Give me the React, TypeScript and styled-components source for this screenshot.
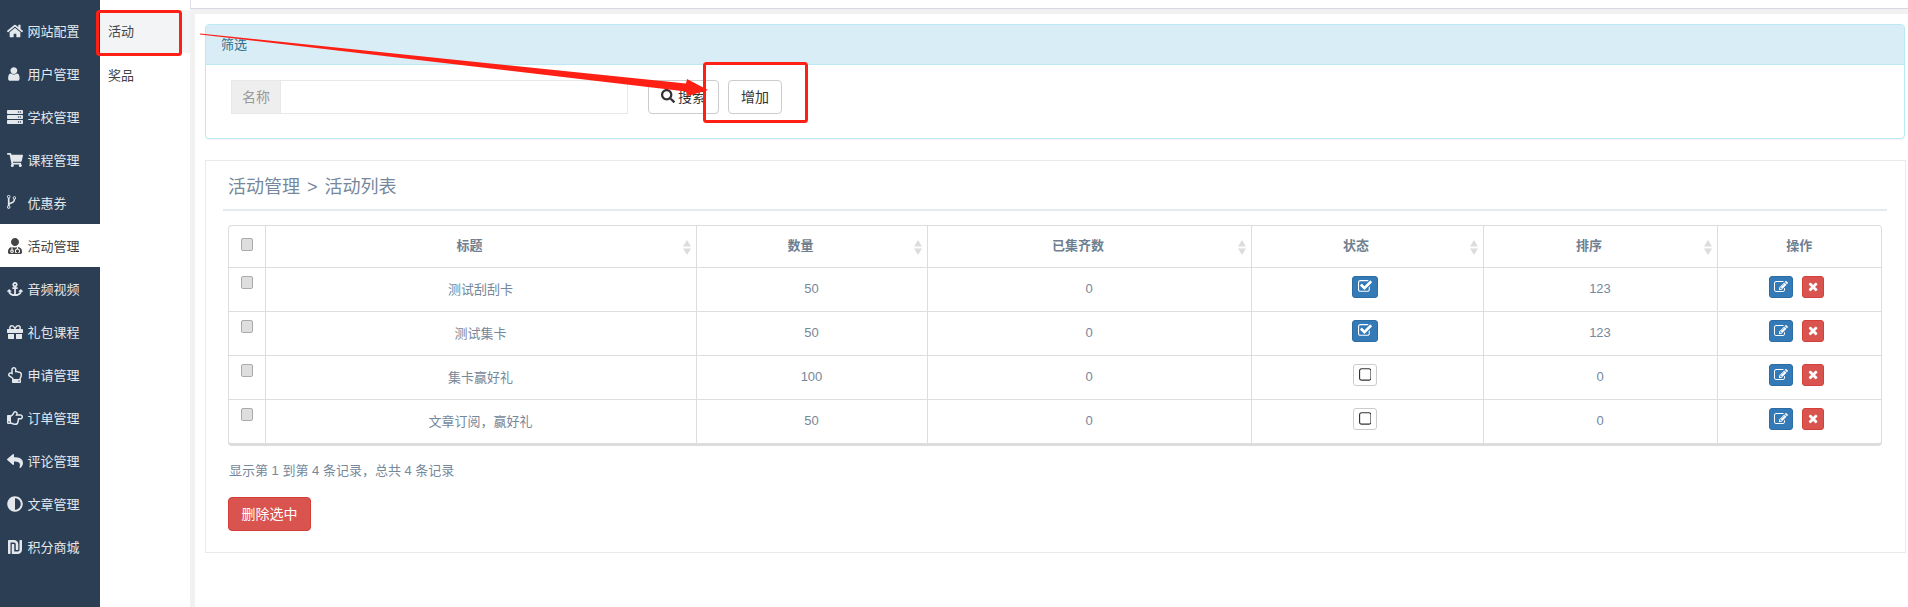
import React from "react";
import styled, { createGlobalStyle } from "styled-components";
import {
  FaHome, FaServer, FaShoppingCart, FaUserMd, FaAnchor, FaGift,
  FaRegHandPointUp, FaRegHandPointRight, FaReply, FaAdjust, FaShekelSign, FaSearch,
} from "react-icons/fa";

const Global = createGlobalStyle`
  html, body { margin: 0; padding: 0; background: #fff; }
  body { font-family: "Liberation Sans", "Noto Sans CJK SC", sans-serif; font-size: 13px; color: #333; }
  * { box-sizing: border-box; }
`;

const Page = styled.div`
  position: relative;
  display: flex;
  width: 1908px;
  height: 607px;
  overflow: hidden;
  background: #fff;
`;

const Sidebar = styled.nav`
  width: 100px;
  flex: none;
  padding-top: 9px;
  background: #2b3e54;
`;

const SideItem = styled.div<{ $active?: boolean }>`
  display: flex;
  align-items: center;
  height: 43px;
  padding-left: 7px;
  font-size: 13px;
  color: ${(p) => (p.$active ? "#444" : "#e4e8ec")};
  background: ${(p) => (p.$active ? "#fff" : "transparent")};
`;

const SideIcon = styled.span`
  display: flex;
  align-items: center;
  width: 20.5px;
  flex: none;
  font-size: 16px;
`;

const SubNav = styled.nav`
  width: 90px;
  flex: none;
  padding-top: 10px;
`;

const SubItem = styled.div<{ $active?: boolean }>`
  display: flex;
  align-items: center;
  height: 43px;
  margin-bottom: 1px;
  padding: 0 0 2px 8px;
  font-size: 13px;
  color: #444;
  background: ${(p) => (p.$active ? "#f3f4f6" : "transparent")};
`;

const Content = styled.div`
  flex: 1;
  display: flex;
  flex-direction: column;
  min-width: 0;
`;

const TopBar = styled.div`
  height: 9px;
  flex: none;
  border-left: 1px solid #dfe2e8;
  border-bottom: 1px solid #d6d9e2;
`;

const Body = styled.div`
  flex: 1;
  padding: 5px 0 0 5px;
  background: #f1f1f1;
  display: flex;
`;

const Inner = styled.main`
  flex: 1;
  padding: 10px 3px 0 10px;
  background: #fff;
`;

const FilterPanel = styled.section`
  height: 115px;
  border: 1px solid #bce8f1;
  border-radius: 4px;
  box-shadow: 0 1px 1px rgba(0, 0, 0, 0.05);
`;

const FilterHeading = styled.div`
  display: flex;
  align-items: center;
  height: 40px;
  padding: 0 0 2px 15px;
  font-size: 13px;
  color: #31708f;
  background: #d9edf7;
  border-bottom: 1px solid #bce8f1;
  border-radius: 3px 3px 0 0;
`;

const FilterRow = styled.div`
  display: flex;
  padding: 15px 0 0 25px;
`;

const InputGroup = styled.div`
  display: flex;
  width: 397px;
  height: 34px;
`;

const Addon = styled.span`
  display: flex;
  align-items: center;
  justify-content: center;
  width: 50px;
  flex: none;
  padding-bottom: 2px;
  font-size: 14px;
  color: #999;
  background: #eee;
  border: 1px solid #e8e8e8;
`;

const TextInput = styled.input`
  flex: 1;
  min-width: 0;
  border: 1px solid #e8e8e8;
  border-left: 0;
  outline: none;
`;

const Button = styled.button<{ $w: number; $ml: number }>`
  display: inline-flex;
  align-items: center;
  justify-content: center;
  gap: 3px;
  width: ${(p) => p.$w}px;
  height: 34px;
  margin-left: ${(p) => p.$ml}px;
  padding: 0 0 2px;
  font: inherit;
  font-size: 14px;
  color: #333;
  background: #fff;
  border: 1px solid #ccc;
  border-radius: 4px;
`;

const Card = styled.section`
  height: 393px;
  margin-top: 21px;
  margin-right: -1px;
  padding: 0 18px 0 17px;
  border: 1px solid #e7eaec;
`;

const CardTitle = styled.h2`
  margin: 0;
  height: 50px;
  padding: 14px 0 0 5px;
  font-size: 18px;
  line-height: 24px;
  font-weight: 400;
  word-spacing: 2px;
  color: #76889b;
  border-bottom: 2px solid #e7eaec;
`;

const TableWrap = styled.div`
  margin: 14px 0 0 5px;
  width: 1654px;
  border: 1px solid #ddd;
  border-bottom-width: 3px;
  border-radius: 4px;
  overflow: hidden;
`;

const Table = styled.table`
  width: 100%;
  table-layout: fixed;
  border-collapse: collapse;
`;

const Head = styled.th<{ $sort?: boolean }>`
  position: relative;
  height: 41px;
  padding: 0 ${(p) => (p.$sort ? 22 : 0)}px 3px 0;
  font-size: 13px;
  font-weight: 700;
  color: #6f7f90;
  text-align: center;
  border-right: 1px solid #ddd;
  border-bottom: 1px solid #ddd;
  &:last-child { border-right: 0; }
`;

const Cell = styled.td`
  height: 44px;
  padding: 0 0 2px;
  font-size: 13px;
  color: #76889b;
  text-align: center;
  border-right: 1px solid #ddd;
  border-bottom: 1px solid #ddd;
  &:last-child { border-right: 0; }
  tr:last-child > & { border-bottom: 0; }
`;

const CheckCell = styled(Cell)`
  vertical-align: top;
  padding-top: 8px;
`;

const CheckHead = styled(Head)`
  vertical-align: top;
  padding-top: 12px;
`;

const Check = styled.input.attrs({ type: "checkbox" })`
  appearance: none;
  display: block;
  width: 12px;
  height: 13px;
  margin: 0 0 0 12px;
  background: #dedede;
  border: 1px solid #aaa;
  border-radius: 2px;
`;

const SortMark = styled.svg`
  position: absolute;
  top: 14px;
  right: 5px;
`;

const IconBtn = styled.span<{ $kind: "blue" | "red" | "plain"; $w: number; $size: number }>`
  display: inline-flex;
  align-items: center;
  justify-content: center;
  width: ${(p) => p.$w}px;
  height: 22px;
  font-size: ${(p) => p.$size}px;
  vertical-align: middle;
  border-radius: 3px;
  color: ${(p) => (p.$kind === "plain" ? "#333" : "#fff")};
  background: ${(p) => ({ blue: "#337ab7", red: "#d9534f", plain: "#fff" })[p.$kind]};
  border: 1px solid ${(p) => ({ blue: "#2e6da4", red: "#d43f3a", plain: "#ccc" })[p.$kind]};
`;

const StatusWrap = styled.div`
  display: flex;
  justify-content: center;
  margin: -3px 4px 0 0;
`;

const Ops = styled.div`
  display: flex;
  justify-content: center;
  gap: 9px;
  margin: -3px 5px 0 0;
`;

const Summary = styled.p`
  margin: 0;
  padding: 15px 0 0 6px;
  font-size: 13px;
  line-height: 19px;
  color: #76889b;
`;

const DangerButton = styled.button`
  display: block;
  width: 83px;
  height: 34px;
  margin: 17px 0 0 5px;
  padding: 0 0 2px;
  font: inherit;
  font-size: 14px;
  color: #fff;
  background: #d9534f;
  border: 1px solid #d43f3a;
  border-radius: 4px;
`;

const Annotation = styled.svg`
  position: absolute;
  inset: 0;
  pointer-events: none;
`;

const Fa4 = ({ w, d }: { w: number; d: string }) => (
  <svg width={`${w / 1792}em`} height="1em" viewBox={`0 0 ${w} 1792`} fill="currentColor">
    <path d={d} />
  </svg>
);

const UserGlyph = () => (
  <Fa4 w={1408} d="M1408 1399q0 109-62.5 187t-150.5 78h-854q-88 0-150.5-78t-62.5-187q0-85 8.5-160.5t31.5-152 58.5-131 94-89 134.5-34.5q131 128 313 128t313-128q76 0 134.5 34.5t94 89 58.5 131 31.5 152 8.5 160.5zm-256-887q0 159-112.5 271.5t-271.5 112.5-271.5-112.5-112.5-271.5 112.5-271.5 271.5-112.5 271.5 112.5 112.5 271.5z" />
);
const ForkGlyph = () => (
  <Fa4 w={1024} d="M288 1344q0-40-28-68t-68-28-68 28-28 68 28 68 68 28 68-28 28-68zm0-1152q0-40-28-68t-68-28-68 28-28 68 28 68 68 28 68-28 28-68zm640 128q0-40-28-68t-68-28-68 28-28 68 28 68 68 28 68-28 28-68zm96 0q0 52-26 96.5t-70 69.5q-2 287-226 414-67 38-203 81-128 40-169.5 71t-41.5 100v26q44 25 70 69.5t26 96.5q0 80-56 136t-136 56-136-56-56-136q0-52 26-96.5t70-69.5v-820q-44-25-70-69.5t-26-96.5q0-80 56-136t136-56 136 56 56 136q0 52-26 96.5t-70 69.5v497q54-26 154-57 55-17 87.5-29.5t70.5-31 59-39.5 40.5-51 28-69.5 8.5-91.5q-44-25-70-69.5t-26-96.5q0-80 56-136t136-56 136 56 56 136z" />
);
const CheckGlyph = () => (
  <Fa4 w={1664} d="M1408 930v318q0 119-84.5 203.5t-203.5 84.5h-832q-119 0-203.5-84.5t-84.5-203.5v-832q0-119 84.5-203.5t203.5-84.5h832q63 0 117 25 15 7 18 23 3 17-9 29l-49 49q-10 10-23 10-3 0-9-2-23-6-45-6h-832q-66 0-113 47t-47 113v832q0 66 47 113t113 47h832q66 0 113-47t47-113v-254q0-13 9-22l64-64q10-10 23-10 6 0 12 3 20 8 20 29zm231-489l-814 814q-24 24-57 24t-57-24l-430-430q-24-24-24-57t24-57l110-110q24-24 57-24t57 24l263 263 647-647q24-24 57-24t57 24l110 110q24 24 24 57t-24 57z" />
);
const SquareGlyph = () => (
  <Fa4 w={1408} d="M1120 256h-832q-66 0-113 47t-47 113v832q0 66 47 113t113 47h832q66 0 113-47t47-113v-832q0-66-47-113t-113-47zm288 160v832q0 119-84.5 203.5t-203.5 84.5h-832q-119 0-203.5-84.5t-84.5-203.5v-832q0-119 84.5-203.5t203.5-84.5h832q119 0 203.5 84.5t84.5 203.5z" />
);
const EditGlyph = () => (
  <Fa4 w={1792} d="M888 1184l116-116-152-152-116 116v56h96v96h56zm440-720q-16-16-33 1l-350 350q-17 17-1 33t33-1l350-350q17-17 1-33zm80 594v190q0 119-84.5 203.5t-203.5 84.5h-832q-119 0-203.5-84.5t-84.5-203.5v-832q0-119 84.5-203.5t203.5-84.5h832q63 0 117 25 15 7 18 23 3 17-9 29l-49 49q-14 14-32 8-23-6-45-6h-832q-66 0-113 47t-47 113v832q0 66 47 113t113 47h832q66 0 113-47t47-113v-126q0-13 9-22l64-64q15-15 35-7t20 29zm-96-738l288 288-672 672h-288v-288zm444 132l-92 92-288-288 92-92q28-28 68-28t68 28l152 152q28 28 28 68t-28 68z" />
);
const TimesGlyph = () => (
  <Fa4 w={1408} d="M1298 1322q0 40-28 68l-136 136q-28 28-68 28t-68-28l-294-294-294 294q-28 28-68 28t-68-28l-136-136q-28-28-28-68t28-68l294-294-294-294q-28-28-28-68t28-68l136-136q28-28 68-28t68 28l294 294 294-294q28-28 68-28t68 28l136 136q28 28 28 68t-28 68l-294 294 294 294q28 28 28 68z" />
);

const side: [React.ReactNode, string][] = [
  [<FaHome />, "网站配置"],
  [<UserGlyph />, "用户管理"],
  [<FaServer />, "学校管理"],
  [<FaShoppingCart />, "课程管理"],
  [<ForkGlyph />, "优惠券"],
  [<FaUserMd />, "活动管理"],
  [<FaAnchor />, "音频视频"],
  [<FaGift />, "礼包课程"],
  [<FaRegHandPointUp />, "申请管理"],
  [<FaRegHandPointRight />, "订单管理"],
  [<FaReply />, "评论管理"],
  [<FaAdjust />, "文章管理"],
  [<FaShekelSign />, "积分商城"],
];

const columns: { label: string; w: number; sort: boolean }[] = [
  { label: "标题", w: 431, sort: true },
  { label: "数量", w: 231, sort: true },
  { label: "已集齐数", w: 324, sort: true },
  { label: "状态", w: 232, sort: true },
  { label: "排序", w: 234, sort: true },
  { label: "操作", w: 164, sort: false },
];

const rows = [
  { title: "测试刮刮卡", count: 50, on: true, order: 123 },
  { title: "测试集卡", count: 50, on: true, order: 123 },
  { title: "集卡赢好礼", count: 100, on: false, order: 0 },
  { title: "文章订阅，赢好礼", count: 50, on: false, order: 0 },
];

const Sort = () => (
  <SortMark width="8" height="15" viewBox="0 0 8 15">
    <path d="M4 0 L8 6.5 H0 Z M0 8.5 H8 L4 15 Z" fill="#dcdcdc" />
  </SortMark>
);

export default function App() {
  return (
    <Page>
      <Global />
      <Sidebar>
        {side.map(([icon, label]) => (
          <SideItem key={label} $active={label === "活动管理"}>
            <SideIcon>{icon}</SideIcon>
            {label}
          </SideItem>
        ))}
      </Sidebar>
      <SubNav>
        <SubItem $active>活动</SubItem>
        <SubItem>奖品</SubItem>
      </SubNav>
      <Content>
        <TopBar />
        <Body>
          <Inner>
            <FilterPanel>
              <FilterHeading>筛选</FilterHeading>
              <FilterRow>
                <InputGroup>
                  <Addon>名称</Addon>
                  <TextInput />
                </InputGroup>
                <Button $w={71} $ml={20}><FaSearch />搜索</Button>
                <Button $w={54} $ml={9}>增加</Button>
              </FilterRow>
            </FilterPanel>
            <Card>
              <CardTitle>活动管理 &gt; 活动列表</CardTitle>
              <TableWrap>
                <Table>
                  <colgroup>
                    <col style={{ width: 36 }} />
                    {columns.map((c) => <col key={c.label} style={{ width: c.w }} />)}
                  </colgroup>
                  <thead>
                    <tr>
                      <CheckHead><Check /></CheckHead>
                      {columns.map((c) => (
                        <Head key={c.label} $sort={c.sort}>
                          {c.label}
                          {c.sort && <Sort />}
                        </Head>
                      ))}
                    </tr>
                  </thead>
                  <tbody>
                    {rows.map((r) => (
                      <tr key={r.title}>
                        <CheckCell><Check /></CheckCell>
                        <Cell>{r.title}</Cell>
                        <Cell>{r.count}</Cell>
                        <Cell>0</Cell>
                        <Cell>
                          <StatusWrap>
                            {r.on ? (
                              <IconBtn $kind="blue" $w={26} $size={15}><CheckGlyph /></IconBtn>
                            ) : (
                              <IconBtn $kind="plain" $w={24} $size={16}><SquareGlyph /></IconBtn>
                            )}
                          </StatusWrap>
                        </Cell>
                        <Cell>{r.order}</Cell>
                        <Cell>
                          <Ops>
                            <IconBtn $kind="blue" $w={24} $size={14}><EditGlyph /></IconBtn>
                            <IconBtn $kind="red" $w={22} $size={13}><TimesGlyph /></IconBtn>
                          </Ops>
                        </Cell>
                      </tr>
                    ))}
                  </tbody>
                </Table>
              </TableWrap>
              <Summary>显示第 1 到第 4 条记录，总共 4 条记录</Summary>
              <DangerButton>删除选中</DangerButton>
            </Card>
          </Inner>
        </Body>
      </Content>
      <Annotation width="1908" height="607" viewBox="0 0 1908 607">
        <rect x="97.5" y="11.5" width="83" height="43" rx="2" fill="none" stroke="#ff2015" strokeWidth="3" />
        <rect x="704.5" y="63.5" width="102" height="58" rx="2" fill="none" stroke="#ff2015" strokeWidth="3" />
        <path d="M200 33.5 L686 83.5 L687 79 L708 90 L688 96 L686 91.5 L200 34.5 Z" fill="#ff2015" />
      </Annotation>
    </Page>
  );
}
